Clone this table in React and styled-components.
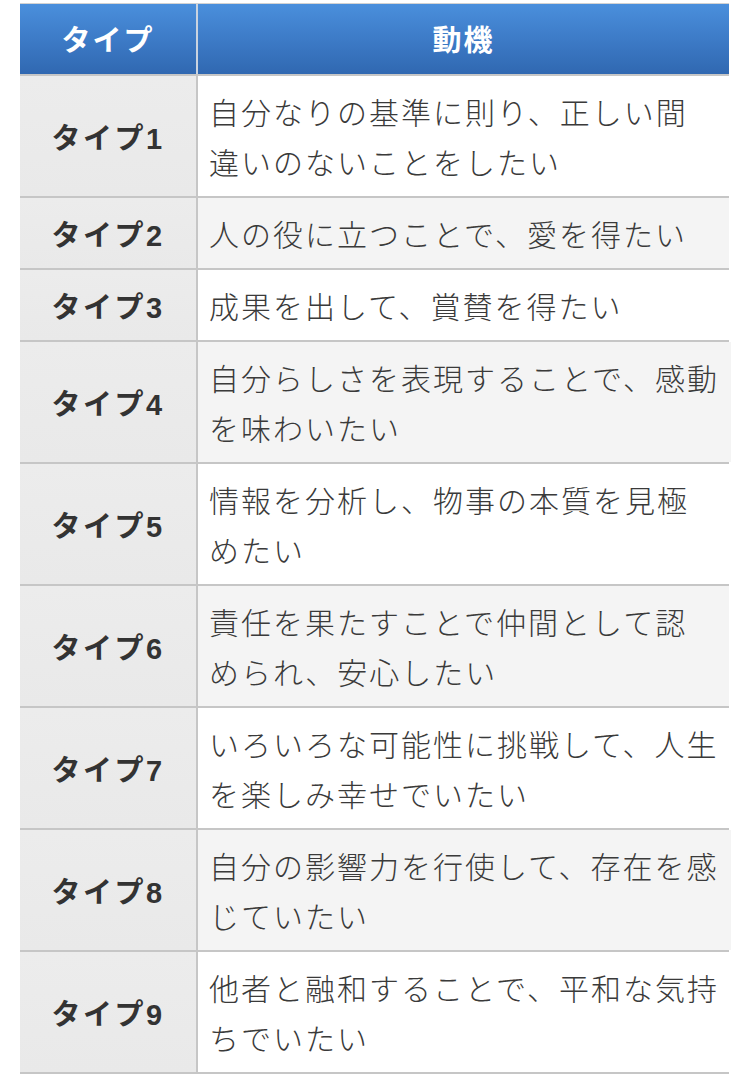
import React from 'react'
import styled, { createGlobalStyle } from 'styled-components'

const GlobalStyle = createGlobalStyle`
  html, body {
    margin: 0;
    padding: 0;
    background: #fff;
  }
  body {
    font-family: "Noto Sans CJK JP", "Noto Sans", sans-serif;
    color: #333;
  }
`

const rows = [
  { type: 'タイプ1', lines: ['自分なりの基準に則り、正しい間', '違いのないことをしたい'] },
  { type: 'タイプ2', lines: ['人の役に立つことで、愛を得たい'] },
  { type: 'タイプ3', lines: ['成果を出して、賞賛を得たい'] },
  { type: 'タイプ4', lines: ['自分らしさを表現することで、感動', 'を味わいたい'] },
  { type: 'タイプ5', lines: ['情報を分析し、物事の本質を見極', 'めたい'] },
  { type: 'タイプ6', lines: ['責任を果たすことで仲間として認', 'められ、安心したい'] },
  { type: 'タイプ7', lines: ['いろいろな可能性に挑戦して、人生', 'を楽しみ幸せでいたい'] },
  { type: 'タイプ8', lines: ['自分の影響力を行使して、存在を感', 'じていたい'] },
  { type: 'タイプ9', lines: ['他者と融和することで、平和な気持', 'ちでいたい'] },
]

function App() {
  return (
    <>
      <GlobalStyle />
      <Table>
        <HeadRow>
          <HeadCell $first>タイプ</HeadCell>
          <HeadCell>動機</HeadCell>
        </HeadRow>
        {rows.map((row, i) => (
          <Row key={row.type}>
            <TypeCell>{row.type}</TypeCell>
            <MotiveCell $alt={i % 2 === 1}>
              {row.lines.map((line) => (
                <Line key={line}>{line}</Line>
              ))}
            </MotiveCell>
          </Row>
        ))}
      </Table>
    </>
  )
}

export default App

const Table = styled.div`
  width: 709px;
  margin: 3px 0 0 20px;
  border-top: 1px solid #d2d2d2;
`

const HeadRow = styled.div`
  display: grid;
  grid-template-columns: 178px 1fr;
  height: 72px;
  box-sizing: border-box;
  background: linear-gradient(to bottom, #4a8fdc 0%, #3d7bc7 50%, #3068b1 100%);
  border-bottom: 2px solid #c6c6c6;
`

const HeadCell = styled.div`
  display: flex;
  align-items: center;
  justify-content: center;
  color: #fff;
  font-family: "Liberation Sans", "Noto Sans CJK JP", sans-serif;
  font-weight: 700;
  font-size: 29px;
  letter-spacing: 2px;
  padding-bottom: 2px;
  border-right: ${(p) => (p.$first ? '2px solid #c9d3e0' : 'none')};
`

const Row = styled.div`
  display: grid;
  grid-template-columns: 178px 1fr;
  border-bottom: 2px solid #c6c6c6;
`

const TypeCell = styled.div`
  display: flex;
  align-items: center;
  justify-content: center;
  background: linear-gradient(to bottom, #ececec, #e9e9e9);
  border-right: 2px solid #c6c6c6;
  font-family: "Liberation Sans", "Noto Sans CJK JP", sans-serif;
  font-weight: 700;
  font-size: 29px;
  letter-spacing: 2.5px;
  color: #333;
`

const MotiveCell = styled.div`
  background: ${(p) => (p.$alt ? '#f4f4f4' : '#fff')};
  padding: 10px 12px 10px 11px;
  font-size: 30px;
  font-weight: 300;
  line-height: 50px;
  letter-spacing: 2px;
  color: #3a3a3a;
`

const Line = styled.div`
  white-space: nowrap;
`
